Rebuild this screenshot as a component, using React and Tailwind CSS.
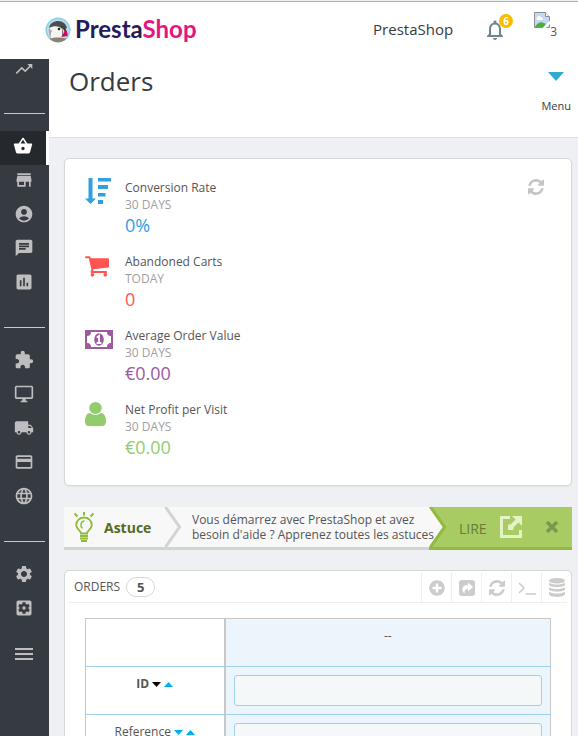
import React from "react";
import {
  MdTrendingUp,
  MdShoppingBasket,
  MdStore,
  MdAccountCircle,
  MdChat,
  MdAssessment,
  MdExtension,
  MdLocalShipping,
  MdPayment,
  MdLanguage,
  MdSettings,
  MdSettingsApplications,
  MdMenu,
  MdNotificationsNone,
} from "react-icons/md";
import { FaPlusCircle } from "react-icons/fa";

function DesktopIcon({ size }) {
  return (
    <svg viewBox="0 0 24 24" width={size} height={size} fill="currentColor" aria-hidden="true">
      <path d="M21 2H3c-1.100 0-2 .9-2 2v12c0 1.100.9 2 2 2h7v2H8v2h8v-2h-2v-2h7c1.100 0 2-.9 2-2V4c0-1.100-.9-2-2-2zm0 14H3V4h18v12z" />
    </svg>
  );
}

function RefreshIcon({ className }) {
  return (
    <svg viewBox="128 128 1536 1536" fill="currentColor" className={className} aria-hidden="true">
      <path d="M1639 1056q0 5-1 7-64 268-268 434.5t-478 166.5q-146 0-282.5-55t-243.5-157l-129 129q-19 19-45 19t-45-19-19-45v-448q0-26 19-45t45-19h448q26 0 45 19t19 45-19 45l-137 137q71 66 161 102t187 36q134 0 250-65t186-179q11-17 53-117 8-23 30-23h192q13 0 22.5 9.5t9.5 22.5zm25-800v448q0 26-19 45t-45 19h-448q-26 0-45-19t-19-45 19-45l138-138q-148-137-349-137-134 0-250 65t-186 179q-11 17-53 117-8 23-30 23h-199q-13 0-22.5-9.5t-9.5-22.5v-7q65-268 270-434.5t480-166.5q146 0 284 55.5t245 156.5l130-129q19-19 45-19t45 19 19 45z" />
    </svg>
  );
}

function SortAmountIcon() {
  return (
    <svg viewBox="0 0 28 28" fill="currentColor" className="h-7 w-7" aria-hidden="true">
      <path d="M3.500 0h4v20.500h3.500l-5.500 5.500L0 20.500h3.500zM13 0h13v3.500H13zM13 7h10v4H13zM13 15h7.500v3.500H13zM13 22h5v4h-5z" />
    </svg>
  );
}

function CartIcon() {
  return (
    <svg viewBox="64 256 1664 1408" fill="currentColor" className="h-[21px] w-6" aria-hidden="true">
      <path d="M704 1536q0 52-38 90t-90 38-90-38-38-90 38-90 90-38 90 38 38 90zm896 0q0 52-38 90t-90 38-90-38-38-90 38-90 90-38 90 38 38 90zm128-1088v512q0 24-16.5 42.5t-40.5 21.5l-1044 122q13 60 13 70 0 16-24 64h920q26 0 45 19t19 45-19 45-45 19h-1024q-26 0-45-19t-19-45q0-11 8-31.5t16-36 21.5-40 15.5-29.5l-177-823h-204q-26 0-45-19t-19-45 19-45 45-19h256q16 0 28.5 6.5t19.5 15.5 13 24.5 8 26 5.5 29.5 4.5 26h1201q26 0 45 19t19 45z" />
    </svg>
  );
}

function MoneyIcon() {
  return (
    <svg viewBox="0 0 28 20" className="h-5 w-7" aria-hidden="true">
      <path fill="currentColor" fillRule="evenodd" d="M0 0h28v19H0zM6 2a4 4 0 0 1-4 4v7a4 4 0 0 1 4 4h16a4 4 0 0 1 4-4V6a4 4 0 0 1-4-4z" />
      <ellipse cx="14" cy="9.500" rx="4.800" ry="6.200" fill="currentColor" />
      <path d="M11.800 7.600 14 5.800v7M11.600 13h4.800" fill="none" stroke="#fff" strokeWidth="1.800" />
    </svg>
  );
}

function UserIcon() {
  return (
    <svg viewBox="256 128 1280 1536" preserveAspectRatio="none" fill="currentColor" className="h-6 w-[21px]" aria-hidden="true">
      <path d="M1536 1399q0 109-62.5 187t-150.5 78h-854q-88 0-150.5-78t-62.5-187q0-85 8.5-160.5t31.5-152 58.5-131 94-89 134.5-34.5q131 128 313 128t313-128q76 0 134.5 34.5t94 89 58.5 131 31.5 152 8.5 160.5zm-256-887q0 159-112.5 271.5t-271.5 112.5-271.5-112.5-112.5-271.5 112.5-271.5 271.5-112.5 271.5 112.5 112.5 271.5z" />
    </svg>
  );
}

function ShareIcon() {
  return (
    <svg viewBox="0 0 16 16" className="h-4 w-4" aria-hidden="true">
      <rect width="16" height="16" rx="3" fill="currentColor" />
      <path d="M9 2.500 14 7 9 11.500V9C6 9 5 10.500 5.800 13.500 1.500 10 3 5 9 5z" fill="#fff" />
    </svg>
  );
}

function TerminalIcon() {
  return (
    <svg viewBox="0 0 18 16" className="h-4 w-[18px]" fill="none" stroke="currentColor" strokeWidth="1.500" aria-hidden="true">
      <path d="M1 3l5 5-5 5M7.500 14H18" />
    </svg>
  );
}

function DatabaseIcon() {
  return (
    <svg viewBox="0 0 16 18" preserveAspectRatio="none" fill="currentColor" className="h-[19px] w-4" aria-hidden="true">
      <ellipse cx="8" cy="2.600" rx="8" ry="2.600" />
      <path d="M0 4.400c3 2.200 13 2.200 16 0v2c0 3-16 3-16 0zM0 8.700c3 2.200 13 2.200 16 0v2c0 3-16 3-16 0zM0 13c3 2.200 13 2.200 16 0v2.200c0 3.600-16 3.600-16 0z" />
    </svg>
  );
}

function BulbIcon() {
  return (
    <svg viewBox="0 0 20 30" className="h-[30px] w-5 shrink-0" fill="none" stroke="#8dbb3a" aria-hidden="true">
      <path d="M7 21.500c0-3-4.800-4-4.800-8.500a7.800 7.500 0 0 1 15.600 0c0 4.500-4.800 5.500-4.800 8.500z" strokeWidth="1.800" />
      <path d="M10.500 9c-4 0-4.500 5.500-2 7.500" strokeWidth="1.500" />
      <path d="M6 24h8M6 26.500h8M7 29h6" strokeWidth="1.800" />
      <path d="M10 0v3.500M.5 1.500 3.500 4.500M19.500 1.500l-3 3" strokeWidth="2" />
    </svg>
  );
}

function PuffinLogo() {
  return (
    <svg viewBox="0 0 26 26" className="h-[26px] w-[26px]" aria-hidden="true">
      <circle cx="13" cy="13" r="12.500" fill="#8fcfdf" />
      <circle cx="13" cy="13" r="11" fill="#b3e0ea" />
      <path d="M4 19c-1-4-1-7 2-10 4-4 10-3 12 2l1 6-2 6c-5 2-10 1-13-4z" fill="#f4f4f4" />
      <path d="M4 11c1-5 5-7 9-7 5 0 8 3 9 7l-4 2c-2-4-9-5-14-2z" fill="#4d4d4f" />
      <path d="M4 11c-1 4 0 8 2 11 0-3-1-5 1-8z" fill="#a8a9ad" />
      <circle cx="14" cy="12" r="1.300" fill="#222" />
      <path d="M16 9c4 0 6 4 6 9l-5 1c1-4 0-7-1-10z" fill="#3a3a3c" />
      <path d="M17 11c1.500 1 2.500 2.500 2.500 4l-1 3c0-3-1-5-1.500-7z" fill="#f5d9a0" />
      <path d="M20 12c2 2 3 4 2.500 7L16 20c2-2 4-4 4-8z" fill="#df0067" />
      <path d="M4.500 21.500c5-1.500 12-1.500 17 0-4 5-13 5-17 0z" fill="#8d8073" />
    </svg>
  );
}

function BrokenImage() {
  return (
    <svg viewBox="0 0 16 16" className="h-4 w-4" aria-hidden="true">
      <path d="M.5.500h11l4 4v11H.5z" fill="#c6d8f5" stroke="#8d8f92" />
      <path d="M2.500 7c0-3 3.500-4 4.500-1.500 2 0 2.500 2 1 2.500H3z" fill="#fff" />
      <path d="M1 15c2-4 6-6 9-4l2 1-2 3z" fill="#4caf3a" />
      <path d="M16 8.500 8.500 16H12l4-4z" fill="#fff" />
      <path d="M11.500.500v4h4" fill="#fff" stroke="#8d8f92" />
    </svg>
  );
}

function Triangle({ up, className }) {
  return (
    <svg viewBox="0 0 8 4" preserveAspectRatio="none" fill="currentColor" className={className} aria-hidden="true">
      <path d={up ? "M0 4h8L4 0z" : "M0 0h8L4 4z"} />
    </svg>
  );
}

const groups = [
  [
    ["Orders", MdShoppingBasket],
    ["Catalog", MdStore],
    ["Customers", MdAccountCircle],
    ["Customer Service", MdChat],
    ["Stats", MdAssessment],
  ],
  [
    ["Modules", MdExtension],
    ["Design", DesktopIcon],
    ["Shipping", MdLocalShipping],
    ["Payment", MdPayment],
    ["International", MdLanguage],
  ],
  [
    ["Shop Parameters", MdSettings],
    ["Advanced Parameters", MdSettingsApplications],
  ],
];

const kpis = [
  { title: "Conversion Rate", period: "30 DAYS", value: "0%", color: "text-[#30a0e0]", Icon: SortAmountIcon },
  { title: "Abandoned Carts", period: "TODAY", value: "0", color: "text-[#ff5450]", Icon: CartIcon },
  { title: "Average Order Value", period: "30 DAYS", value: "€0.00", color: "text-[#9c5a9f]", Icon: MoneyIcon },
  { title: "Net Profit per Visit", period: "30 DAYS", value: "€0.00", color: "text-[#92cc6c]", Icon: UserIcon },
];

const tools = [
  ["Add new order", () => <FaPlusCircle size={16} />],
  ["Export", ShareIcon],
  ["Refresh list", () => <RefreshIcon className="h-4 w-4" />],
  ["Show SQL query", TerminalIcon],
  ["Export to SQL Manager", DatabaseIcon],
];

function TopBar() {
  return (
    <header className="flex h-[58px] shrink-0 items-center border-t border-[#b0b0b0] bg-white pr-[21px] pb-[2px] pl-[45px]">
      <a href="#home" className="flex items-center gap-1 font-['Lato',sans-serif] text-[24px] leading-7 font-bold">
        <PuffinLogo />
        <span className="pb-[2px] text-[#251b5b]">
          Presta<span className="text-[#e5157f]">Shop</span>
        </span>
      </a>
      <a href="#shop" className="ml-auto text-[15px] text-[#363a41]">PrestaShop</a>
      <button type="button" aria-label="Notifications" className="relative ml-[30px] text-[#6c868e]">
        <MdNotificationsNone size={24} />
        <span className="absolute -top-1 left-4 h-[14px] w-[14px] rounded-full bg-[#fbbb00] text-[10px] leading-[14px] font-bold text-white">
          6
        </span>
      </button>
      <a href="#profile" className="ml-[27px] flex items-start pb-2 text-[12px]">
        <BrokenImage />
        <span className="pt-3 leading-4">3</span>
      </a>
    </header>
  );
}

function Sidebar() {
  return (
    <nav className="w-[49px] shrink-0 bg-[#363a41] text-[#bebebe]">
      <a href="#dashboard" aria-label="Dashboard" className="flex h-7 justify-center pr-[2px]">
        <MdTrendingUp size={20} />
      </a>
      {groups.map((items, g) => (
        <div key={g}>
          <hr className="mx-1 mt-[26px] mb-[17px] border-[#bbcdd2]" />
          {items.map(([label, Icon], i) => (
            <a
              key={label}
              href="#section"
              aria-label={label}
              className={
                g === 0 && i === 0
                  ? "flex h-[34px] items-center justify-center border-r-[3px] border-white bg-[#25282d] pb-1 text-white"
                  : "flex h-[34px] items-center justify-center pr-[2px] pb-1"
              }
            >
              <Icon size={20} />
            </a>
          ))}
        </div>
      ))}
      <button type="button" aria-label="Toggle menu" className="mt-3 flex h-[34px] w-full items-center justify-center pr-[2px] pb-1">
        <MdMenu size={24} />
      </button>
    </nav>
  );
}

function KpiCard() {
  return (
    <section className="flex items-start rounded-[5px] border border-[#d3d8db] bg-white pt-5 pr-[27px] pb-[10px] pl-5 shadow-xs">
      <ul className="flex-1">
        {kpis.map(({ title, period, value, color, Icon }) => (
          <li key={title} className="flex h-[74px]">
            <span className={`flex h-[26px] w-10 items-center ${color}`}>
              <Icon />
            </span>
            <div className="text-[12px] leading-[17px]">
              <p>{title}</p>
              <p className="text-[#a0a0a0]">{period}</p>
              <p className={`text-[18px] leading-6 ${color}`}>{value}</p>
            </div>
          </li>
        ))}
      </ul>
      <button type="button" aria-label="Refresh" className="text-[#c5c5c5]">
        <RefreshIcon className="h-4 w-4" />
      </button>
    </section>
  );
}

function Tip() {
  return (
    <aside className="mt-[21px] flex h-[43px] border-b-[3px] border-[#d3d3d3] bg-[#f8f8f8]">
      <div className="flex w-[100px] shrink-0 items-center gap-[10px] pl-[10px]">
        <BulbIcon />
        <strong className="text-[14px] text-[#566b20]">Astuce</strong>
      </div>
      <svg viewBox="0 0 18 40" className="h-10 w-[18px] shrink-0" fill="none" aria-hidden="true">
        <path d="M1.500 0 15.500 20 1.500 40" stroke="#d3d3d3" strokeWidth="3" />
      </svg>
      <p className="relative z-10 h-10 min-w-0 flex-1 pt-[5px] pl-[10px] text-[12px] leading-[15px] whitespace-nowrap">
        Vous démarrez avec PrestaShop et avez
        <br />
        besoin d'aide ? Apprenez toutes les astuces
      </p>
      <div className="flex h-[43px] w-[143px] shrink-0 border-b-[3px] border-[#90bb3e] bg-[#a8cb64]">
        <svg viewBox="0 0 18 40" className="h-10 w-[18px]" aria-hidden="true">
          <path d="M0 0 14 20 0 40z" fill="#f8f8f8" />
          <path d="M1.500 0 15.500 20 1.500 40" fill="none" stroke="#90bb3e" strokeWidth="3" />
        </svg>
        <a href="#lire" className="flex items-center gap-[13px] pl-3 text-[14px] text-[#677d35]">
          <span className="pt-[2px]">LIRE</span>
          <svg viewBox="0 0 22 22" className="h-[22px] w-[22px]" aria-hidden="true" fill="none" stroke="#e5f2c5" strokeWidth="3">
            <path d="M10 1.500H1.500v19h19V14" />
            <path d="M12 0h10v10l-3.500-3.500-5 5V14H8V8.500h2.500l5-5z" fill="#e5f2c5" stroke="none" />
          </svg>
        </a>
        <button type="button" aria-label="Close" className="flex flex-1 items-center justify-center pl-[10px] text-[#7c9750]">
          <svg viewBox="0 0 12 12" className="h-3 w-3" stroke="currentColor" strokeWidth="3.400" aria-hidden="true">
            <path d="M1 1l10 10M11 1 1 11" />
          </svg>
        </button>
      </div>
    </aside>
  );
}

function FilterRow({ label, name, active }) {
  return (
    <tr className="h-12 border-t border-[#9fd0ea]">
      <th scope="row" className={active ? "border-r-2 border-[#c8c8c8] pt-2 align-top font-bold" : "border-r-2 border-[#c8c8c8] pt-2 align-top font-normal"}>
        <div className="flex items-center justify-center gap-[3px]">
          <label htmlFor={name}>{label}</label>
          <button type="button" aria-label={`Sort ${label} descending`} className={active ? "text-black" : "text-[#00aff0]"}>
            <Triangle className="h-[5px] w-[9px]" />
          </button>
          <button type="button" aria-label={`Sort ${label} ascending`} className="text-[#00aff0]">
            <Triangle up className="h-[5px] w-[9px]" />
          </button>
        </div>
      </th>
      <td className="bg-[#ecf5fc] p-2">
        <input id={name} type="text" className="block h-[31px] w-full rounded-[3px] border border-[#a0d0eb] bg-[#f5f8f9] px-2" />
      </td>
    </tr>
  );
}

function OrdersPanel() {
  return (
    <section className="mt-5 rounded-[5px] border border-[#d3d8db] bg-white px-1 pb-5">
      <div className="flex h-8 items-center border-b border-[#eee] pl-[5px]">
        <h2 className="text-[12px]">ORDERS</h2>
        <span className="ml-[6px] h-5 w-[29px] rounded-full border border-[#d3d8db] text-center text-[13px] leading-[18px] font-bold">
          5
        </span>
        <div className="-mr-1 ml-auto flex self-stretch pt-[2px] text-[#ccc]">
          {tools.map(([label, Icon]) => (
            <button key={label} type="button" aria-label={label} className="flex w-[30px] items-center justify-center border-l border-[#eee]">
              <Icon />
            </button>
          ))}
        </div>
      </div>
      <div className="px-4 pt-[15px]">
        <table className="w-full table-fixed border-collapse border border-[#c8c8c8] text-[12px]">
          <colgroup>
            <col className="w-[139px]" />
            <col />
          </colgroup>
          <tbody>
            <tr className="h-12">
              <td className="border-r-2 border-[#c8c8c8]" />
              <td className="bg-[#ecf5fc] pt-2 text-center align-top">--</td>
            </tr>
            <FilterRow label="ID" name="order-id" active />
            <FilterRow label="Reference" name="order-reference" />
          </tbody>
        </table>
      </div>
    </section>
  );
}

export default function App() {
  return (
    <div className="flex h-screen flex-col overflow-hidden bg-[#eff0f3] pt-px font-['Open_Sans',sans-serif] text-[#555]">
      <TopBar />
      <div className="flex min-h-0 flex-1">
        <Sidebar />
        <div className="min-w-0 flex-1 overflow-hidden">
          <div className="flex h-[79px] items-start justify-between border-b border-[#dcdfe2] bg-white pr-[7px] pl-5 text-[#363a41]">
            <h1 className="pt-[2px] text-[26px] leading-10">Orders</h1>
            <button type="button" className="flex flex-col items-center gap-4 pt-[13px] text-[11px] leading-[18px]">
              <Triangle className="h-[9px] w-4 text-[#2eacce]" />
              Menu
            </button>
          </div>
          <main className="pt-5 pr-[6px] pl-[15px]">
            <KpiCard />
            <Tip />
            <OrdersPanel />
          </main>
        </div>
      </div>
    </div>
  );
}
